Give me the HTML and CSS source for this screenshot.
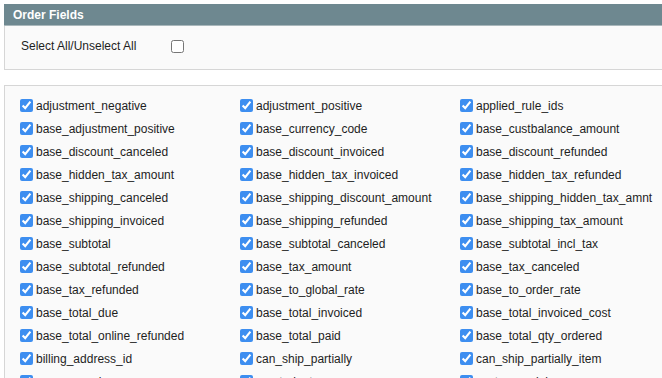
FILE: index.html
```html
<!DOCTYPE html>
<html lang="en">
  <head>
    <meta charset="UTF-8" />
    <meta name="viewport" content="width=device-width, initial-scale=1.0" />
    <title>Order Fields</title>
    <link rel="stylesheet" href="styles.css">
  </head>
  <body>
    <div class="section">
      <div class="section-head">Order Fields</div>
      <div class="panel select-all">
        <label class="select-label" for="toggle-all">Select All/Unselect All</label>
        <input type="checkbox" id="toggle-all" class="toggle" />
      </div>
      <div class="panel fields"></div>
    </div>

    <script>
      const FIELDS = [
        "adjustment_negative", "adjustment_positive", "applied_rule_ids",
        "base_adjustment_positive", "base_currency_code", "base_custbalance_amount",
        "base_discount_canceled", "base_discount_invoiced", "base_discount_refunded",
        "base_hidden_tax_amount", "base_hidden_tax_invoiced", "base_hidden_tax_refunded",
        "base_shipping_canceled", "base_shipping_discount_amount", "base_shipping_hidden_tax_amnt",
        "base_shipping_invoiced", "base_shipping_refunded", "base_shipping_tax_amount",
        "base_subtotal", "base_subtotal_canceled", "base_subtotal_incl_tax",
        "base_subtotal_refunded", "base_tax_amount", "base_tax_canceled",
        "base_tax_refunded", "base_to_global_rate", "base_to_order_rate",
        "base_total_due", "base_total_invoiced", "base_total_invoiced_cost",
        "base_total_online_refunded", "base_total_paid", "base_total_qty_ordered",
        "billing_address_id", "can_ship_partially", "can_ship_partially_item",
        "coupon_code", "created_at", "customer_dob",
      ];

      const $fields = document.querySelector(".fields");

      FIELDS.forEach((name) => {
        const $item = document.createElement("label");
        $item.className = "field";
        $item.innerHTML = `<input type="checkbox" checked /><span>${name}</span>`;
        $fields.appendChild($item);
      });

      document.querySelector(".toggle").addEventListener("change", (e) => {
        $fields.querySelectorAll("input").forEach(($box) => {
          $box.checked = e.target.checked;
        });
      });
    </script>
  </body>
</html>
```

FILE: styles.css
```css
* {
  padding: 0;
  margin: 0;
  box-sizing: border-box;
}
body {
  height: 100vh;
  overflow: hidden;
  padding: 4px 0 0 4px;
  font-family: "Liberation Sans", Arial, sans-serif;
  font-size: 12px;
  color: #1e1e1e;
  background: #fff;
}
.section {
  width: 700px;
}
.section-head {
  height: 22px;
  line-height: 22px;
  padding-left: 9px;
  background: #6e8890;
  color: #fff;
  font-weight: bold;
  font-size: 12px;
  border-bottom: 1px solid #a9b7bb;
}
.panel {
  background: #fafafa;
  border-left: 1px solid #d6d6d6;
}
.select-all {
  display: flex;
  align-items: center;
  height: 44px;
  padding: 0 0 3px 16px;
  border-bottom: 1px solid #d6d6d6;
}
.select-label {
  width: 150px;
  font-size: 12px;
}
input[type="checkbox"] {
  width: 13px;
  height: 13px;
  margin: 0;
  accent-color: #3d8ef0;
}
.toggle {
  margin-top: 2px;
}
.fields {
  display: grid;
  grid-template-columns: repeat(3, 220px);
  grid-auto-rows: 23px;
  margin-top: 15px;
  padding: 8px 0 0 15px;
  border-top: 1px solid #d6d6d6;
}
.field {
  display: flex;
  align-items: center;
  gap: 3px;
}
.field span {
  line-height: 14px;
}
```
